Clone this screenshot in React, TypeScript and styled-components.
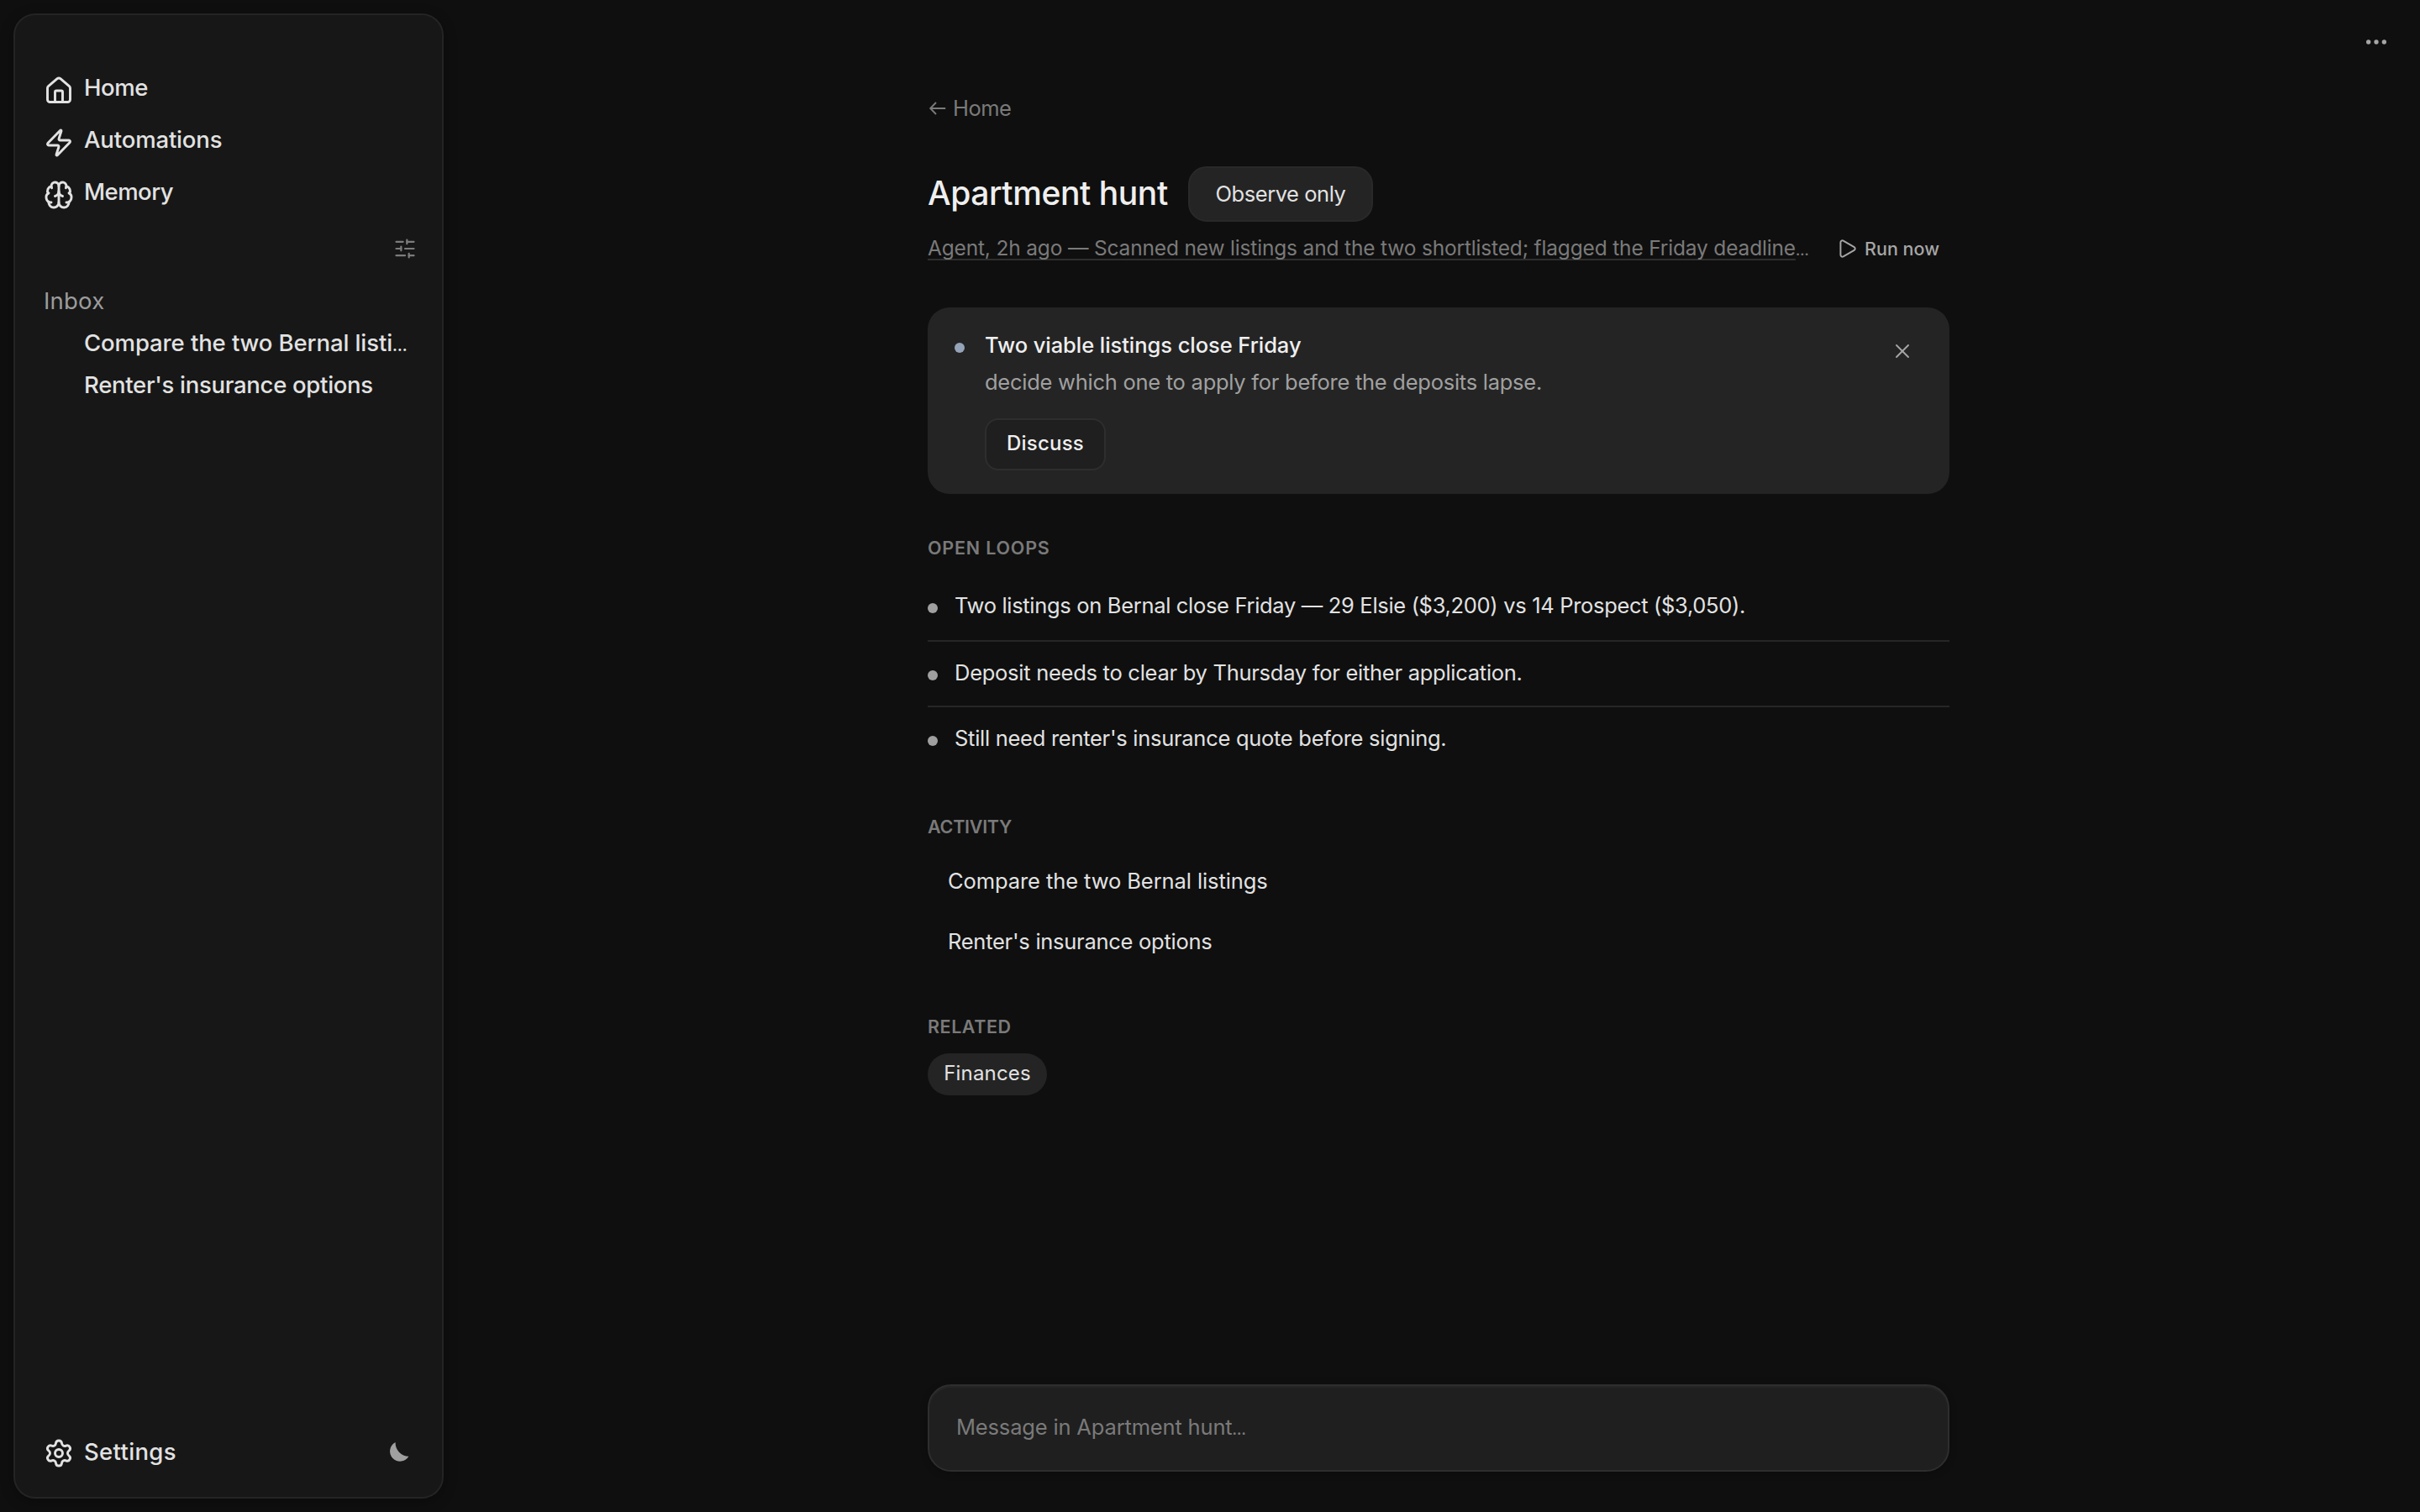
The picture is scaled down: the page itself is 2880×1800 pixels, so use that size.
import { Brain, Ellipsis, House, LucideIcon, Play, Settings, SlidersHorizontal, X, Zap } from 'lucide-react';
import styled, { createGlobalStyle } from 'styled-components';

interface INavItem {
  icon: LucideIcon;
  label: string;
  spacing: number;
}

interface ITextItem {
  text: string;
  spacing: number;
  cut?: boolean;
}

const navItems: INavItem[] = [
  { icon: House, label: 'Home', spacing: -0.45 },
  { icon: Zap, label: 'Automations', spacing: -0.15 },
  { icon: Brain, label: 'Memory', spacing: -0.53 },
];

const inbox: ITextItem[] = [
  { text: 'Compare the two Bernal listi', spacing: -0.1, cut: true },
  { text: "Renter's insurance options", spacing: -0.29 },
];

const openLoops: ITextItem[] = [
  {
    text: 'Two listings on Bernal close Friday — 29 Elsie ($3,200) vs 14 Prospect ($3,050).',
    spacing: -0.32,
  },
  { text: 'Deposit needs to clear by Thursday for either application.', spacing: -0.27 },
  { text: "Still need renter's insurance quote before signing.", spacing: -0.28 },
];

const activity: ITextItem[] = [
  { text: 'Compare the two Bernal listings', spacing: -0.09 },
  { text: "Renter's insurance options", spacing: -0.27 },
];

const MoonIcon: React.FC = () => (
  <svg width="23" height="23" viewBox="0 0 23 23" fill="currentColor">
    <path d="M6.6 0A12 12 0 1 0 22.4 16.8A16 16 0 0 1 6.6 0Z" />
  </svg>
);

const BackArrow: React.FC = () => (
  <svg width="22" height="18" viewBox="0 0 22 18" fill="none" stroke="currentColor" strokeWidth="1.9">
    <path d="M21.2 9H3.2M10 2L3.2 9L10 16" />
  </svg>
);

const Sidebar: React.FC = () => (
  <SidebarPanel>
    <nav>
      {navItems.map(({ icon: Icon, label, spacing }) => (
        <NavRow key={label}>
          <Icon size={36} strokeWidth={1.95} />
          <NavLabel $spacing={spacing}>{label}</NavLabel>
        </NavRow>
      ))}
    </nav>
    <FilterRow>
      <SlidersHorizontal size={28} strokeWidth={1.9} />
    </FilterRow>
    <GroupTitle>Inbox</GroupTitle>
    {inbox.map(({ text, spacing, cut }) => (
      <Thread key={text} $spacing={spacing}>
        {text}
        {cut && <Dots>…</Dots>}
      </Thread>
    ))}
    <SidebarFooter>
      <Settings size={36} strokeWidth={1.95} />
      <FooterLabel $spacing={0.33}>Settings</FooterLabel>
      <ThemeToggle>
        <MoonIcon />
      </ThemeToggle>
    </SidebarFooter>
  </SidebarPanel>
);

const App: React.FC = () => {
  return (
    <>
      <GlobalStyle />
      <Page>
        <Sidebar />
        <Main>
          <TopBar>
            <Ellipsis size={32} />
          </TopBar>
          <Column>
            <BackLink>
              <BackArrow />
              <span>Home</span>
            </BackLink>
            <TitleRow>
              <Title>Apartment hunt</Title>
              <ModeButton>Observe only</ModeButton>
            </TitleRow>
            <StatusRow>
              <Status>
                <StatusText>
                  Agent, 2h ago — Scanned new listings and the two shortlisted; flagged the Friday deadline
                </StatusText>
                <Dots>…</Dots>
              </Status>
              <RunButton>
                <Play size={26} strokeWidth={1.8} />
                Run now
              </RunButton>
            </StatusRow>

            <Notice>
              <NoticeDot />
              <NoticeBody>
                <NoticeTitle>Two viable listings close Friday</NoticeTitle>
                <NoticeText>decide which one to apply for before the deposits lapse.</NoticeText>
                <DiscussButton>Discuss</DiscussButton>
              </NoticeBody>
              <CloseButton>
                <X size={28} strokeWidth={1.6} />
              </CloseButton>
            </Notice>

            <Section>
              <SectionTitle $spacing={0.8}>OPEN LOOPS</SectionTitle>
              {openLoops.map(({ text, spacing }) => (
                <Loop key={text} $spacing={spacing}>
                  {text}
                </Loop>
              ))}
            </Section>

            <Section>
              <SectionTitle $spacing={-0.25} $tight>
                ACTIVITY
              </SectionTitle>
              {activity.map(({ text, spacing }) => (
                <ActivityRow key={text} $spacing={spacing}>
                  {text}
                </ActivityRow>
              ))}
            </Section>

            <Section>
              <SectionTitle $spacing={0.55}>RELATED</SectionTitle>
              <Chip>Finances</Chip>
            </Section>

            <Composer>
              Message in Apartment hunt<Dots>…</Dots>
            </Composer>
          </Column>
        </Main>
      </Page>
    </>
  );
};

const GlobalStyle = createGlobalStyle`
  * {
    box-sizing: border-box;
  }

  body {
    margin: 0;
    background: #0f0f0f;
    color: #e2e2e2;
    font-family: Inter, 'Liberation Sans', sans-serif;
    font-size: 25.5px;
  }

  svg {
    display: block;
    flex-shrink: 0;
  }

  button {
    border: 0;
    padding: 0;
    background: none;
    color: inherit;
    font: inherit;
  }
`;

const Page = styled.div`
  display: flex;
  gap: 16px;
  height: 1800px;
  padding-left: 16px;
`;

const Dots = styled.span`
  font-size: 0.64em;
  font-weight: 700;
`;

const SidebarPanel = styled.aside`
  display: flex;
  flex-direction: column;
  width: 512px;
  margin: 16px 0;
  padding: 59px 30px 22px 34px;
  border: 2px solid #242424;
  border-radius: 26px;
  background: #171717;
  box-shadow: 0 4px 16px rgba(0, 0, 0, 0.3);
  font-size: 27.5px;
  font-weight: 500;
`;

const NavRow = styled.div`
  display: flex;
  align-items: center;
  gap: 12px;
  height: 62px;
`;

const NavLabel = styled.span<{ $spacing: number }>`
  padding-bottom: 9px;
  letter-spacing: ${({ $spacing }) => $spacing}px;
`;

const FilterRow = styled.div`
  display: flex;
  align-items: center;
  justify-content: flex-end;
  height: 66px;
  color: #7c7c7c;
`;

const GroupTitle = styled.div`
  margin-top: 4px;
  line-height: 50px;
  color: #9c9c9c;
  font-weight: 400;
  letter-spacing: 0.2px;
`;

const Thread = styled.div<{ $spacing: number }>`
  height: 50px;
  padding-left: 48px;
  line-height: 50px;
  letter-spacing: ${({ $spacing }) => $spacing}px;
  white-space: nowrap;
`;

const SidebarFooter = styled.div`
  display: flex;
  align-items: center;
  gap: 12px;
  height: 60px;
  margin-top: auto;
`;

const FooterLabel = styled(NavLabel)`
  padding-bottom: 4px;
`;

const ThemeToggle = styled.button`
  margin: 0 9px 3px auto;
  color: #a0a0a0;
`;

const Main = styled.main`
  display: flex;
  flex: 1;
  flex-direction: column;
`;

const TopBar = styled.header`
  display: flex;
  align-items: center;
  justify-content: flex-end;
  height: 100px;
  padding-right: 36px;
  color: #a6a6a6;
`;

const Column = styled.div`
  display: flex;
  flex: 1;
  flex-direction: column;
  width: 1216px;
  margin: 0 auto;
  padding: 8px 0 48px;
`;

const BackLink = styled.div`
  display: flex;
  align-items: center;
  gap: 8px;
  height: 40px;
  padding-top: 1px;
  color: #7a7a7a;
  letter-spacing: -0.5px;
`;

const TitleRow = styled.div`
  display: flex;
  align-items: center;
  gap: 24px;
  height: 66px;
  margin-top: 50px;
`;

const Title = styled.h1`
  width: 286px;
  margin: 0;
  padding-bottom: 3px;
  color: #efefef;
  font-size: 39px;
  font-weight: 500;
  letter-spacing: -0.42px;
  white-space: nowrap;
`;

const ModeButton = styled.button`
  width: 220px;
  height: 66px;
  padding-bottom: 2px;
  border: 2px solid #292929;
  border-radius: 22px;
  background: #242424;
  letter-spacing: -0.44px;
`;

const StatusRow = styled.div`
  display: flex;
  align-items: center;
  justify-content: space-between;
  height: 44px;
  margin-top: 10px;
  padding-right: 12px;
`;

const Status = styled.div`
  display: flex;
  align-items: baseline;
  padding-bottom: 2px;
  color: #7a7a7a;
  font-size: 24.5px;
  letter-spacing: -0.17px;
  white-space: nowrap;
`;

const StatusText = styled.span`
  text-decoration: underline #2e2e2e 2px;
  text-decoration-skip-ink: none;
  text-underline-offset: 4px;
`;

const RunButton = styled.button`
  display: flex;
  align-items: center;
  gap: 8.5px;
  color: #a6a6a6;
  font-size: 21.5px;
  font-weight: 500;
  letter-spacing: 0;
`;

const Notice = styled.section`
  display: flex;
  height: 222px;
  margin-top: 48px;
  padding: 23px 42px 28px 32px;
  border-radius: 26px;
  background: #242424;
`;

const NoticeDot = styled.span`
  width: 12px;
  height: 12px;
  margin: 19px 24px 0 0;
  border-radius: 50%;
  background: #94a3b8;
`;

const NoticeBody = styled.div`
  flex: 1;
  line-height: 44px;
`;

const NoticeTitle = styled.div`
  color: #efefef;
  font-weight: 500;
  letter-spacing: -0.06px;
`;

const NoticeText = styled.div`
  color: #a0a0a0;
  letter-spacing: -0.26px;
`;

const DiscussButton = styled.button`
  display: block;
  width: 144px;
  height: 62px;
  margin-top: 21px;
  padding-bottom: 3px;
  border: 2px solid #2e2e2e;
  border-radius: 16px;
  background: #1f1f1f;
  color: #efefef;
  font-size: 24px;
  font-weight: 500;
  letter-spacing: 0.21px;
`;

const CloseButton = styled.button`
  align-self: flex-start;
  margin-top: 15px;
  color: #a6a6a6;
`;

const Section = styled.section`
  display: flex;
  flex-direction: column;
  align-items: stretch;

  ${Notice} + & {
    margin-top: 44px;
  }

  & + & {
    margin-top: 46px;
  }
`;

const SectionTitle = styled.h2<{ $spacing: number; $tight?: boolean }>`
  margin: 0 0 ${({ $tight }) => ($tight ? 8 : 12)}px;
  color: #7a7a7a;
  font-size: 21.5px;
  font-weight: 600;
  letter-spacing: ${({ $spacing }) => $spacing}px;
  line-height: 40px;
`;

const Loop = styled.div<{ $spacing: number }>`
  display: flex;
  gap: 20px;
  height: 78px;
  padding-top: 17px;
  border-bottom: 2px solid #262626;
  letter-spacing: ${({ $spacing }) => $spacing}px;
  line-height: 40px;

  &::before {
    content: '';
    width: 12px;
    height: 12px;
    margin-top: 17px;
    border-radius: 50%;
    background: #a0a0a0;
  }

  &:first-of-type {
    height: 80px;
  }

  &:last-child {
    height: 76px;
    border-bottom: 0;
  }
`;

const ActivityRow = styled.div<{ $spacing: number }>`
  height: 72px;
  padding-left: 24px;
  letter-spacing: ${({ $spacing }) => $spacing}px;
  line-height: 74px;
`;

const Chip = styled.span`
  align-self: flex-start;
  width: 142px;
  height: 50px;
  border-radius: 25px;
  background: #242424;
  font-size: 24px;
  letter-spacing: 0.17px;
  line-height: 48px;
  text-align: center;
`;

const Composer = styled.div`
  height: 104px;
  margin-top: auto;
  padding: 0 32px;
  border: 2px solid #2e2e2e;
  border-radius: 28px;
  background: #1f1f1f;
  box-shadow: inset 0 2px 1px rgba(255, 255, 255, 0.03), 0 2px 8px rgba(0, 0, 0, 0.25);
  color: #7a7a7a;
  letter-spacing: -0.17px;
  line-height: 98px;
`;

export default App;
